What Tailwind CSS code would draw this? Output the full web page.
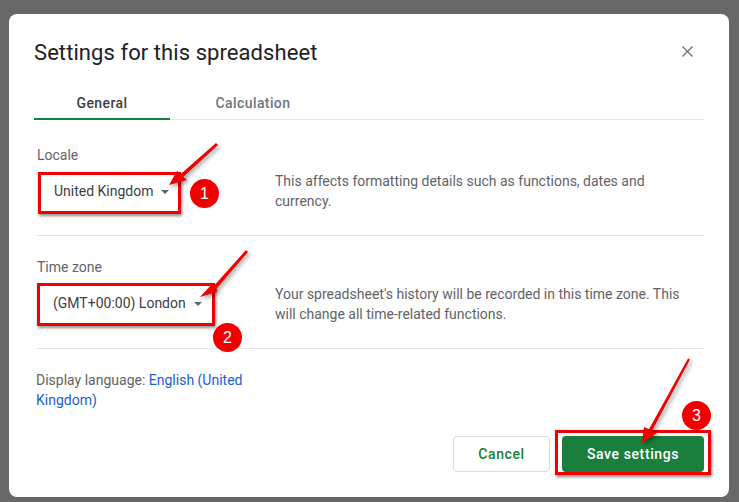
<!DOCTYPE html>
<html lang="en">
<head>
  <meta charset="UTF-8" />
  <title>Settings for this spreadsheet</title>
  <script src="https://cdn.jsdelivr.net/npm/@tailwindcss/browser@4"></script>
</head>
<body class="relative w-[739px] h-[502px] overflow-hidden bg-[#666766] font-['Roboto',sans-serif]">
  <!-- Dialog -->
  <div class="relative ml-[9px] mt-[14px] w-[720px] h-[483px] bg-white rounded-[8px] pl-[25px] pr-[25px] flex flex-col">
    <!-- Header -->
    <div class="flex items-center justify-between h-[76px] pb-[1px]">
      <h1 class="mt-[2px] text-[22px] leading-[28px] text-[#202124] tracking-[0.07px]">Settings for this spreadsheet</h1>
      <svg class="w-[11px] h-[11px] mr-[11px]" viewBox="0 0 11 11" fill="none" stroke="#6f7070" stroke-width="1.4"><path d="M0.5 0.5 10.5 10.5M10.5 0.5 0.5 10.5"/></svg>
    </div>

    <!-- Tabs -->
    <div class="flex h-[30px] border-b border-[#e3e4e4] w-[670px] text-[14px] font-medium tracking-[0.4px]">
      <div class="w-[136px] h-[30px] text-center leading-[26px] text-[#3c4043] border-b-2 border-[#188038]">General</div>
      <div class="w-[166px] text-center leading-[26px] text-[#70757a]">Calculation</div>
    </div>

    <!-- Locale -->
    <div class="ml-[2px] w-[668px] h-[116px] border-b border-[#e6e7e7] flex">
      <div class="w-[239px] pt-[26px]">
        <div class="text-[14px] leading-[18px] text-[#5f6368] ml-[1px]">Locale</div>
        <div class="mt-[8px] ml-[2px] w-[143px] h-[42px] pb-[3px] border-[3px] border-[#f00000] flex items-center pl-[13px] text-[14px] text-[#3c4043] shadow-[1px_2px_3px_rgba(0,0,0,0.45)]">
          United Kingdom
          <span class="ml-[7px] w-0 h-0 border-x-[4px] border-x-transparent border-t-[4px] border-t-[#5f6368]"></span>
        </div>
      </div>
      <p class="pt-[51px] w-[400px] text-[14px] leading-[20px] text-[#5f6368]">This affects formatting details such as functions, dates and currency.</p>
    </div>

    <!-- Time zone -->
    <div class="ml-[2px] w-[668px] h-[113px] border-b border-[#e6e7e7] flex">
      <div class="w-[239px] pt-[22px]">
        <div class="text-[14px] leading-[18px] text-[#5f6368] ml-[1px]">Time zone</div>
        <div class="mt-[7px] ml-[1px] w-[178px] h-[43px] pb-[2px] border-[3px] border-[#f00000] flex items-center pl-[13px] text-[14px] text-[#3c4043] shadow-[1px_2px_3px_rgba(0,0,0,0.45)]">
          (GMT+00:00) London
          <span class="ml-[8px] w-0 h-0 border-x-[4px] border-x-transparent border-t-[4px] border-t-[#5f6368]"></span>
        </div>
      </div>
      <p class="pt-[48px] w-[410px] text-[14px] leading-[20px] text-[#5f6368]">Your spreadsheet's history will be recorded in this time zone. This will change all time-related functions.</p>
    </div>

    <!-- Display language -->
    <p class="ml-[2px] mt-[21px] w-[225px] text-[14px] leading-[20px] text-[#5f6368]">Display language: <span class="text-[#1a5fd0]">English (United</span><br /><span class="text-[#1a5fd0]">Kingdom)</span></p>

    <!-- Footer -->
    <div class="mt-auto mb-[22px] mr-[-7px] flex items-end justify-end">
      <div class="mb-[3px] w-[97px] h-[36px] rounded-[4px] border border-[#dadce0] bg-white flex items-center justify-center text-[14px] font-medium tracking-[0.6px] text-[#188038]">Cancel</div>
      <div class="ml-[5px] border-[3px] border-[#f00000] pt-[3px] px-[4px] shadow-[1px_2px_3px_rgba(0,0,0,0.45)]">
        <div class="w-[142px] h-[36px] rounded-[4px] bg-[#1a7f3c] flex items-center justify-center text-[14px] font-medium tracking-[0.6px] text-white">Save settings</div>
      </div>
    </div>
  </div>

  <!-- Annotations -->
  <svg class="absolute left-0 top-0 w-[739px] h-[502px] pointer-events-none drop-shadow-[2px_2px_2px_rgba(0,0,0,0.4)]" viewBox="0 0 739 502" fill="#f00000">
    <path d="M216 143 180.8 174 177 171 169 185 187 180 183.2 177 218 145Z"/>
    <path d="M246 250 213.6 286.2 213 283 200 297 217 292 216.4 288.8 248 252Z"/>
    <path d="M688 358.5 649 429.2 644 427 642 443 657 433 652 430.8 690 359.5Z"/>
  </svg>

  <!-- Number badges -->
  <div class="absolute left-[190px] top-[179px] w-[29px] h-[29px] rounded-full bg-[#f00000] text-white text-[16px] flex items-center justify-center font-['Liberation_Sans',sans-serif]">1</div>
  <div class="absolute left-[213px] top-[323px] w-[29px] h-[29px] rounded-full bg-[#f00000] text-white text-[16px] flex items-center justify-center font-['Liberation_Sans',sans-serif]">2</div>
  <div class="absolute left-[682px] top-[401px] w-[29px] h-[29px] rounded-full bg-[#f00000] text-white text-[16px] flex items-center justify-center font-['Liberation_Sans',sans-serif]">3</div>
</body>
</html>
